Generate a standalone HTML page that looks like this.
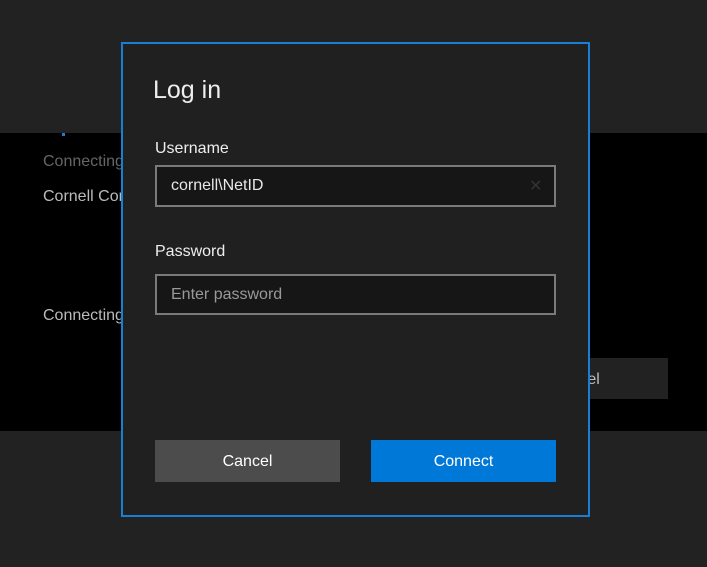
<!DOCTYPE html>
<html><head><style>
*{margin:0;padding:0;box-sizing:border-box}
body{width:707px;height:567px;background:#222;position:relative;overflow:hidden;font-family:"Liberation Sans","DejaVu Sans",sans-serif;}
.abs{position:absolute}
.band{left:0;top:133px;width:707px;height:298px;background:#000}
.t{color:#bbb;font-size:16px;white-space:nowrap}
.dlg{left:121px;top:42px;width:469px;height:475px;border:2px solid #1a7fd4;background:#202020}
.inp{border:2px solid #7a7a7a;background:#161616;color:#e8e8e8;font-size:16px;padding-left:14px;line-height:37px}
.btn{font-size:16px;color:#fff;text-align:center;line-height:43px}
</style></head><body>
<div class="abs band"></div>
<div class="abs" style="left:62px;top:133px;width:3px;height:3px;background:#1a7fd4"></div>
<div class="abs t" style="left:43px;top:153px;color:#666">Connecting</div>
<div class="abs t" style="left:43px;top:188px">Cornell Connect</div>
<div class="abs t" style="left:43px;top:307px">Connecting</div>
<div class="abs" style="left:560px;top:358px;width:108px;height:41px;background:#222"></div>
<div class="abs t" style="left:550px;top:371px">Cancel</div>
<div class="abs dlg"></div>
<div class="abs" style="left:153px;top:76px;font-size:25px;color:#eee">Log in</div>
<div class="abs" style="left:155px;top:140px;font-size:16px;color:#eee">Username</div>
<div class="abs inp" style="left:155px;top:165px;width:401px;height:42px">cornell\NetID</div>
<div class="abs" style="left:529px;top:176px;color:#333;font-size:16px">✕</div>
<div class="abs" style="left:155px;top:243px;font-size:16px;color:#eee">Password</div>
<div class="abs inp" style="left:155px;top:274px;width:401px;height:41px;color:#999">Enter password</div>
<div class="abs btn" style="left:155px;top:440px;width:185px;height:42px;background:#4c4c4c">Cancel</div>
<div class="abs btn" style="left:371px;top:440px;width:185px;height:42px;background:#0078d7">Connect</div>
</body></html>
